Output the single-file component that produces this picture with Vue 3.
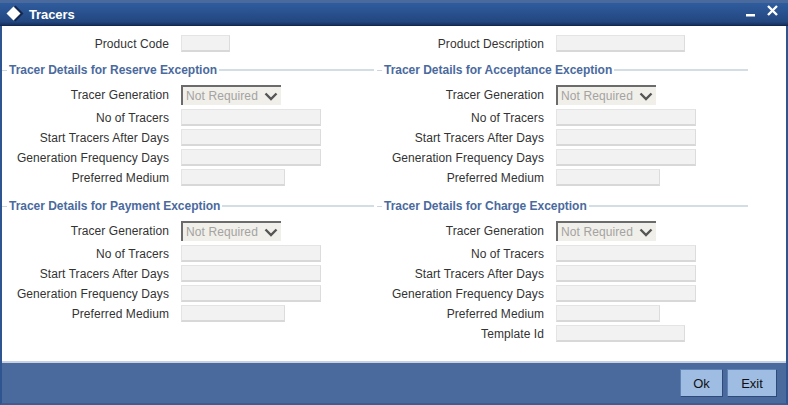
<script setup>
const sections = [
  { title: 'Tracer Details for Reserve Exception' },
  { title: 'Tracer Details for Acceptance Exception' },
  { title: 'Tracer Details for Payment Exception' },
  { title: 'Tracer Details for Charge Exception', template: true },
]
const fields = [
  { label: 'No of Tracers', size: 'wide' },
  { label: 'Start Tracers After Days', size: 'wide' },
  { label: 'Generation Frequency Days', size: 'wide' },
  { label: 'Preferred Medium', size: 'mid' },
]
</script>

<template>
  <div class="window">
    <header class="titlebar">
      <svg class="logo" width="18" height="18" viewBox="0 0 18 18">
        <path d="M9.500.5l8 8-8 8-8-8z" fill="#14284f" />
        <path d="M7.500 1.500l7 7-7 7-7-7z" fill="#fff" />
      </svg>
      <span class="title">Tracers</span>
      <svg class="win-btn" width="33" height="14" viewBox="0 0 33 14">
        <path d="M1 9h9v2.500H1z" fill="#fff" />
        <path d="M23 1l9 9M32 1l-9 9" stroke="#fff" stroke-width="2.400" fill="none" />
      </svg>
    </header>

    <main class="content">
      <div class="top">
        <div class="row">
          <label>Product Code</label>
          <input class="short" disabled />
        </div>
        <div class="row">
          <label>Product Description</label>
          <input class="mid" disabled />
        </div>
      </div>

      <div class="sections">
        <section v-for="s in sections" :key="s.title" class="section">
          <div class="legend">
            <span class="stub"></span>
            <h2>{{ s.title }}</h2>
            <span class="rule"></span>
          </div>
          <div class="row gen">
            <label>Tracer Generation</label>
            <div class="select-wrap">
              <select disabled><option>Not Required</option></select>
              <svg class="chev" width="14" height="9" viewBox="0 0 14 9">
                <path d="M1.500 1.500L7 7l5.500-5.500" stroke="#555" stroke-width="2.400" fill="none" />
              </svg>
            </div>
          </div>
          <div v-for="f in fields" :key="f.label" class="row field">
            <label>{{ f.label }}</label>
            <input :class="f.size" disabled />
          </div>
          <div v-if="s.template" class="row field">
            <label>Template Id</label>
            <input class="mid-long" disabled />
          </div>
        </section>
      </div>
    </main>

    <footer class="footer">
      <button class="ok">Ok</button>
      <button class="exit">Exit</button>
    </footer>
  </div>
</template>

<style>
html, body { margin: 0; background: #fff; }
</style>

<style scoped>
.window {
  width: 788px;
  height: 405px;
  box-sizing: border-box;
  display: flex;
  flex-direction: column;
  background: #4a6a9e;
  border-left: 2px solid #2f5590;
  border-right: 2px solid #2f5590;
  border-bottom: 2px solid #3d5d92;
  font-family: "Liberation Sans", Arial, sans-serif;
  font-size: 12px;
  color: #333;
}
.titlebar {
  height: 26px;
  flex: none;
  box-sizing: border-box;
  display: flex;
  align-items: center;
  background: linear-gradient(#2f5c9e, #23477f 85%, #16305f);
  border-top: 3px solid #4a6a9e;
  border-bottom: 1px solid #12284f;
  margin: 0 -2px;
  padding: 0 10px 0 6px;
}
.logo { flex: none; }
.title {
  margin-left: 5px;
  color: #fff;
  font-weight: bold;
  font-size: 13px;
  letter-spacing: -0.1px;
}
.win-btn { margin-left: auto; margin-top: -4px; }
.content {
  flex: 1;
  background: #fff;
  border-bottom: 2px solid #c6d2e3;
  display: flex;
  flex-direction: column;
}
.top {
  display: grid;
  grid-template-columns: 375px 1fr;
  padding-top: 9px;
  height: 35px;
  box-sizing: border-box;
}
.sections {
  display: grid;
  grid-template-columns: 375px 371px;
  grid-template-rows: 136px auto;
}
.row {
  display: grid;
  grid-template-columns: 167px auto;
  column-gap: 12px;
  align-items: center;
  justify-items: start;
  height: 17px;
}
.row label {
  justify-self: end;
  white-space: nowrap;
  letter-spacing: 0.08px;
}
.section { width: 100%; padding-top: 2px; }
.legend {
  display: flex;
  align-items: center;
  height: 14px;
  margin-right: 3px;
}
.section:nth-child(even) .legend { margin-right: 0; }
.stub { width: 5px; height: 1px; background: #c9d6df; flex: none; }
.rule { flex: 1; height: 2px; background: #d3dde4; }
.legend h2 {
  margin: 0 2px;
  font-size: 12px;
  font-weight: bold;
  color: #4a6a9e;
  white-space: nowrap;
  letter-spacing: -0.02px;
}
.gen { height: 20px; margin-top: 8px; margin-bottom: 4px; }
.field { margin-bottom: 3px; }
input {
  box-sizing: border-box;
  height: 17px;
  padding: 0;
  margin: 0;
  background: #f2f2f2;
  border: 1px solid #e4e4e4;
  border-right-color: #dcdcdc;
  border-bottom: 2px solid #d8d8d8;
}
.short { width: 49px; }
.mid { width: 104px; }
.top .mid { width: 129px; }
.mid-long { width: 129px; }
.wide { width: 140px; }
.select-wrap { position: relative; width: 100px; height: 20px; }
select {
  appearance: none;
  width: 100%;
  height: 100%;
  box-sizing: border-box;
  padding: 0 0 0 3px;
  margin: 0;
  background: #f1efe9;
  border: none;
  border-top: 2px solid #6b6b6b;
  border-left: 2px solid #6b6b6b;
  border-radius: 0;
  font: 12px "Liberation Sans", Arial, sans-serif;
  letter-spacing: 0.1px;
  color: #a3a3a3;
  opacity: 1;
}
.chev { position: absolute; right: 3px; top: 7px; }
.footer {
  height: 40px;
  flex: none;
  display: flex;
  justify-content: flex-end;
  gap: 4px;
  padding: 6px 9px 0 0;
  box-sizing: border-box;
}
button {
  height: 28px;
  padding: 0;
  background: #9fbde3;
  border: 1px solid;
  border-color: #5f82b5 #2f4a78 #2f4a78 #5f82b5;
  font: 13px "Liberation Sans", Arial, sans-serif;
  color: #111;
}
.ok { width: 43px; }
.exit { width: 50px; }
</style>
